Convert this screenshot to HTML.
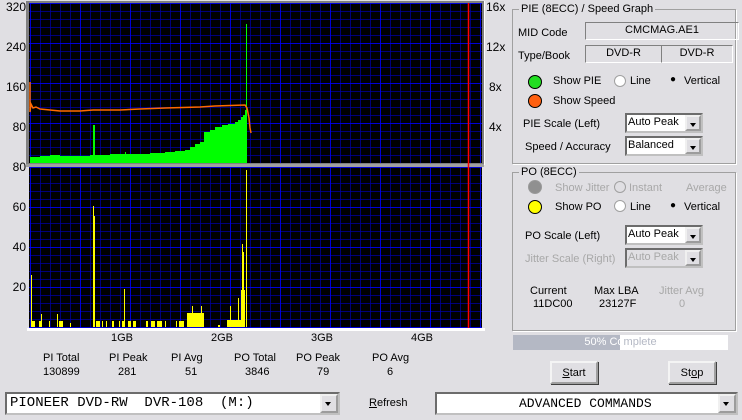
<!DOCTYPE html>
<html><head><meta charset="utf-8"><style>
body{margin:0;width:742px;height:420px;background:#e0dfe3;font-family:"Liberation Sans",sans-serif;font-size:11px;color:#000;position:relative;overflow:hidden}
.a{position:absolute;white-space:nowrap}
.r{text-align:right}
.gb{position:absolute;border:1px solid #a0a0a0;box-shadow:1px 1px 0 #fff}
.gb>span{position:absolute;top:-7px;left:6px;background:#e0dfe3;padding:0 2px}
.fld{position:absolute;border:1px solid #808080;border-right-color:#fff;border-bottom-color:#fff;text-align:center;line-height:15px}
.cb{position:absolute;background:#fff;border:2px inset #c0c0c0;box-sizing:border-box;line-height:17px;padding-left:3px}
.cb i{position:absolute;right:0;top:0;bottom:0;width:16px;background:#e0dfe3;border:2px outset #f0f0f0;box-sizing:border-box}
.cb i:after{content:"";position:absolute;left:3px;top:6px;border:3px solid transparent;border-top:4px solid #000;border-bottom:0}
.btn{position:absolute;background:#e0dfe3;border:2px outset #f4f4f4;box-sizing:border-box;text-align:center;line-height:20px;box-shadow:1px 1px 0 #404040}
.led{position:absolute;width:12px;height:12px;border-radius:50%;border:1px solid #000}
.rd{position:absolute;width:10px;height:10px;border-radius:50%;background:#fff;border:1px solid #a0a0a0}
.dis{color:#a8a8a8}
</style></head><body>
<div class="a r" style="left:0;width:26px;top:0;font-size:12px">320</div>
<div class="a r" style="left:0;width:26px;top:40px;font-size:12px">240</div>
<div class="a r" style="left:0;width:26px;top:80px;font-size:12px">160</div>
<div class="a r" style="left:0;width:26px;top:120px;font-size:12px">80</div>
<div class="a r" style="left:0;width:26px;top:160px;font-size:12px">80</div>
<div class="a r" style="left:0;width:26px;top:200px;font-size:12px">60</div>
<div class="a r" style="left:0;width:26px;top:240px;font-size:12px">40</div>
<div class="a r" style="left:0;width:26px;top:280px;font-size:12px">20</div>
<div class="a" style="left:486px;top:0;font-size:12px">16x</div>
<div class="a" style="left:486px;top:40px;font-size:12px">12x</div>
<div class="a" style="left:489px;top:80px;font-size:12px">8x</div>
<div class="a" style="left:489px;top:120px;font-size:12px">4x</div>
<svg class="a" style="left:0;top:0" width="500" height="335">
<defs>
<pattern id="gm" x="30" y="3" width="10" height="8" patternUnits="userSpaceOnUse"><path d="M0 0V8M0 0H10" stroke="#0000a0" stroke-width="1.5" fill="none"/></pattern>
<pattern id="gM" x="30" y="3" width="50" height="40" patternUnits="userSpaceOnUse"><path d="M0 0V40M0 0H50" stroke="#0000ff" stroke-width="1.5" fill="none"/></pattern>
<pattern id="gm2" x="30" y="167" width="10" height="8" patternUnits="userSpaceOnUse"><path d="M0 0V8M0 0H10" stroke="#0000a0" stroke-width="1.5" fill="none"/></pattern>
<pattern id="gM2" x="30" y="167" width="50" height="40" patternUnits="userSpaceOnUse"><path d="M0 0V40M0 0H50" stroke="#0000ff" stroke-width="1.5" fill="none"/></pattern>
</defs>
<rect x="27" y="1" width="458" height="164" fill="#fff"/>
<rect x="26" y="1" width="458" height="163" fill="#808080"/>
<rect x="29" y="3" width="453" height="160" fill="#000"/>
<rect x="29" y="3" width="453" height="160" fill="url(#gm)"/>
<rect x="29" y="3" width="453" height="160" fill="url(#gM)"/>
<rect x="26" y="164" width="458" height="3" fill="#a0a0a0"/>
<rect x="29" y="167" width="453" height="161" fill="#000"/>
<rect x="29" y="167" width="453" height="161" fill="url(#gm2)"/>
<rect x="29" y="167" width="453" height="161" fill="url(#gM2)"/>
<rect x="27" y="328" width="458" height="3" fill="#fff"/>
<line x1="468.5" y1="3" x2="468.5" y2="328" stroke="#ff0000" stroke-width="1.5"/>
<path fill="#00ff00" d="M30 163V157H40V156H50V155H60V156H90V155H93V125H95V155H110V154H125V152H126V154H150V153H165V152H175V151H185V150H190V147H195V144H200V142H204V132H210V130H215V127H222V125H228V124H235V122H238V120H241V117H243V115H245V110H246V24H247V163Z"/>
<polyline fill="none" stroke="#ff6a00" stroke-width="1.5" points="30,82 30,112 31,104 33,108 36,107 40,109 50,110 60,111 80,111 93,110 120,110 140,109 165,108 200,107 215,106 245,105 247,108 249,118 250,128 251,133"/>
<g fill="#ffff00">
<rect x="31" y="275" width="1" height="52"/><rect x="32" y="321" width="3" height="6"/><rect x="39" y="321" width="3" height="6"/><rect x="41" y="314" width="1" height="13"/><rect x="49" y="321" width="1" height="6"/><rect x="57" y="314" width="1" height="13"/><rect x="59" y="321" width="4" height="6"/><rect x="70" y="323" width="1" height="4"/>
<rect x="93" y="206" width="1" height="121"/><rect x="94" y="216" width="1" height="111"/><rect x="96" y="321" width="4" height="6"/><rect x="102" y="321" width="1" height="6"/><rect x="106" y="321" width="1" height="6"/><rect x="112" y="321" width="2" height="6"/><rect x="119" y="321" width="1" height="6"/><rect x="124" y="289" width="1" height="38"/><rect x="122" y="321" width="3" height="6"/><rect x="128" y="321" width="3" height="6"/><rect x="133" y="321" width="3" height="6"/><rect x="146" y="321" width="2" height="6"/><rect x="151" y="321" width="4" height="6"/><rect x="157" y="321" width="5" height="6"/><rect x="165" y="321" width="1" height="6"/><rect x="176" y="321" width="1" height="6"/><rect x="179" y="321" width="5" height="6"/>
<rect x="187" y="313" width="17" height="14"/><rect x="192" y="306" width="1" height="21"/><rect x="201" y="306" width="1" height="21"/><rect x="218" y="325" width="2" height="2"/>
<rect x="227" y="320" width="15" height="7"/><rect x="230" y="306" width="1" height="21"/><rect x="238" y="298" width="1" height="29"/><rect x="241" y="290" width="4" height="37"/><rect x="242" y="244" width="1" height="83"/><rect x="243" y="252" width="1" height="75"/><rect x="246" y="170" width="1" height="157"/>
</g>
</svg>
<div class="a" style="left:111px;top:332px">1GB</div>
<div class="a" style="left:211px;top:332px">2GB</div>
<div class="a" style="left:311px;top:332px">3GB</div>
<div class="a" style="left:411px;top:332px">4GB</div>
<div class="a" style="left:43px;top:352px">PI Total</div><div class="a" style="left:43px;top:366px">130899</div>
<div class="a" style="left:109px;top:352px">PI Peak</div><div class="a" style="left:118px;top:366px">281</div>
<div class="a" style="left:171px;top:352px">PI Avg</div><div class="a" style="left:185px;top:366px">51</div>
<div class="a" style="left:234px;top:352px">PO Total</div><div class="a" style="left:245px;top:366px">3846</div>
<div class="a" style="left:296px;top:352px">PO Peak</div><div class="a" style="left:317px;top:366px">79</div>
<div class="a" style="left:372px;top:352px">PO Avg</div><div class="a" style="left:387px;top:366px">6</div>
<div class="cb" style="left:5px;top:392px;width:335px;height:23px;font-family:'Liberation Mono',monospace;font-size:14px;line-height:19px;white-space:pre">PIONEER DVD-RW  DVR-108  (M:)<i style="width:18px"></i></div>
<div class="a" style="left:369px;top:397px"><u>R</u>efresh</div>
<div class="cb" style="left:435px;top:392px;width:303px;height:23px;font-family:'Liberation Mono',monospace;font-size:13px;line-height:19px;padding-left:82px">ADVANCED COMMANDS<i style="width:18px"></i></div>
<div class="gb" style="left:512px;top:9px;width:222px;height:153px"><span>PIE (8ECC) / Speed Graph</span></div>
<div class="a" style="left:518px;top:27px">MID Code</div>
<div class="fld" style="left:585px;top:22px;width:152px;height:16px">CMCMAG.AE1</div>
<div class="a" style="left:518px;top:50px">Type/Book</div>
<div class="fld" style="left:585px;top:45px;width:75px;height:16px">DVD-R</div>
<div class="fld" style="left:661px;top:45px;width:70px;height:16px">DVD-R</div>
<div class="led" style="left:528px;top:75px;background:#22dd22"></div>
<div class="a" style="left:553px;top:75px">Show PIE</div>
<div class="rd" style="left:614px;top:75px"></div><div class="a" style="left:630px;top:75px">Line</div>
<div class="a" style="left:670px;top:74px;font-size:10px">●</div><div class="a" style="left:684px;top:75px">Vertical</div>
<div class="led" style="left:528px;top:94px;background:#ff6010"></div>
<div class="a" style="left:553px;top:95px">Show Speed</div>
<div class="a" style="left:523px;top:118px">PIE Scale (Left)</div>
<div class="cb" style="left:625px;top:113px;width:78px;height:20px;padding-left:1px;line-height:15px">Auto Peak<i></i></div>
<div class="a" style="left:525px;top:141px">Speed / Accuracy</div>
<div class="cb" style="left:625px;top:136px;width:78px;height:20px;padding-left:1px;line-height:15px">Balanced<i></i></div>
<div class="gb" style="left:512px;top:172px;width:222px;height:157px"><span>PO (8ECC)</span></div>
<div class="led" style="left:528px;top:180px;background:#909090;border-color:#999"></div>
<div class="a dis" style="left:555px;top:182px">Show Jitter</div>
<div class="rd" style="left:614px;top:181px;background:#e0dfe3"></div><div class="a dis" style="left:629px;top:182px">Instant</div>
<div class="a dis" style="left:686px;top:182px">Average</div>
<div class="led" style="left:528px;top:200px;background:#ffff00"></div>
<div class="a" style="left:555px;top:201px">Show PO</div>
<div class="rd" style="left:614px;top:200px"></div><div class="a" style="left:630px;top:201px">Line</div>
<div class="a" style="left:670px;top:200px;font-size:10px">●</div><div class="a" style="left:684px;top:201px">Vertical</div>
<div class="a" style="left:525px;top:230px">PO Scale (Left)</div>
<div class="cb" style="left:625px;top:225px;width:78px;height:20px;padding-left:1px;line-height:15px">Auto Peak<i></i></div>
<div class="a dis" style="left:525px;top:253px">Jitter Scale (Right)</div>
<div class="cb dis" style="left:625px;top:248px;width:78px;height:20px;padding-left:1px;line-height:15px;background:#e0dfe3">Auto Peak<i></i></div>
<div class="a" style="left:530px;top:285px">Current</div><div class="a" style="left:533px;top:298px">11DC00</div>
<div class="a" style="left:594px;top:285px">Max LBA</div><div class="a" style="left:599px;top:298px">23127F</div>
<div class="a dis" style="left:659px;top:285px">Jitter Avg</div><div class="a dis" style="left:679px;top:298px">0</div>
<div class="a" style="left:513px;top:335px;width:215px;height:15px;background:#fff"></div>
<div class="a" style="left:513px;top:335px;width:107px;height:15px;background:#b4b8c4"></div>
<div class="a" style="left:513px;top:335px;width:215px;line-height:15px;text-align:center;color:#fff">50% Co<span style="color:#b4b8c4">mplete</span></div>
<div class="btn" style="left:550px;top:361px;width:48px;height:23px"><u>S</u>tart</div>
<div class="btn" style="left:668px;top:361px;width:48px;height:23px">St<u>o</u>p</div>
</body></html>
